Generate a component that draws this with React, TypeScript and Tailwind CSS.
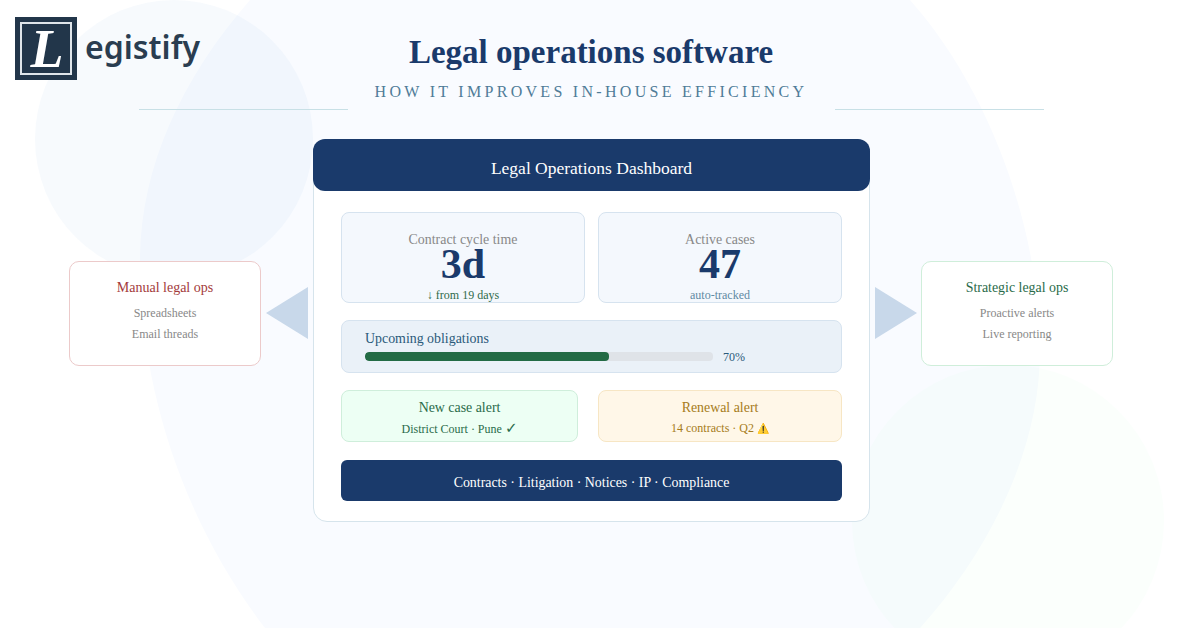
export default function App() {
  return (
    <div className="relative w-[1200px] h-[628px] overflow-hidden bg-white font-['Liberation_Serif',serif]">
      <svg className="absolute left-0 top-0" width="1200" height="628" viewBox="0 0 1200 628">
        <path d="M250 0C180 80 140 170 140 260C140 400 190 530 265 628L920 628C990 550 1040 450 1040 350C1040 230 990 90 910 0Z" fill="#f9fbff" />
      </svg>
      <div className="absolute left-[35px] top-0 w-[278px] h-[278px] rounded-full bg-[#bfd4f2]/12" />
      <div className="absolute left-[852px] top-[365px] w-[312px] h-[312px] rounded-full bg-[#dcfce7]/12" />

      <div className="absolute left-[15px] top-[17px] flex items-start">
        <div className="w-[62px] h-[63px] bg-[#22364a] p-[5px]">
          <div className="w-full h-full border-2 border-[#dfe5ea] flex items-center justify-center">
            <span className="text-white text-[54px] leading-none font-bold italic ml-[2px]">L</span>
          </div>
        </div>
        <span className="ml-[8px] mt-[10px] text-[32px] leading-[40px] font-semibold text-[#2a3d50] font-['Noto_Sans',sans-serif]">egistify</span>
      </div>

      <div className="relative flex flex-col">
        <div className="w-[1182px] flex flex-col items-center">
          <h1 className="mt-[31px] text-[33px] leading-[42px] font-bold text-[#1a3a6b]">Legal operations software</h1>
          <div className="flex items-center">
            <div className="w-[209px] h-px bg-[#c8e0e6] mt-[36px]" />
            <div className="w-[487px] text-center text-[16px] leading-[20px] tracking-[3.29px] text-[#4f7c98]">HOW IT IMPROVES IN-HOUSE EFFICIENCY</div>
            <div className="w-[209px] h-px bg-[#c8e0e6] mt-[36px]" />
          </div>
        </div>

        <div className="mt-[29px] w-full flex items-start pl-[69px]">
          <div className="mt-[122px] w-[192px] h-[105px] rounded-[10px] border border-[#eccaca] bg-white flex flex-col items-center pt-[16px]">
            <div className="text-[14px] leading-[20px] text-[#a33b3b]">Manual legal ops</div>
            <div className="mt-[5px] text-[12px] leading-[21px] text-[#888888]">Spreadsheets</div>
            <div className="text-[12px] leading-[21px] text-[#888888]">Email threads</div>
          </div>
          <div className="mt-[148px] ml-[5px] w-0 h-0 border-y-[26px] border-y-transparent border-r-[42px] border-r-[#c8d8ea]" />
          <div className="ml-[5px] w-[557px] h-[383px] rounded-[14px] border border-[#d6e4ec] bg-white flex flex-col">
            <div className="mx-[-1px] mt-[-1px] h-[52px] rounded-[12px] bg-[#1a3a6b] flex items-center justify-center pt-[6px] text-[17.5px] text-white">Legal Operations Dashboard</div>
            <div className="px-[27px] pt-[21px] flex flex-col">
              <div className="flex gap-[13px]">
                <div className="w-[244px] h-[91px] rounded-[8px] border border-[#d6e3ef] bg-[#f4f8fd] flex flex-col items-center pt-[18px]">
                  <div className="text-[13.9px] leading-[17px] text-[#888888]">Contract cycle time</div>
                  <div className="text-[42px] leading-[32px] font-bold text-[#1a3a6b]">3d</div>
                  <div className="mt-[8px] text-[12px] leading-[14px] text-[#2f6b4a]">↓ from 19 days</div>
                </div>
                <div className="w-[244px] h-[91px] rounded-[8px] border border-[#d6e3ef] bg-[#f4f8fd] flex flex-col items-center pt-[18px]">
                  <div className="text-[13.9px] leading-[17px] text-[#888888]">Active cases</div>
                  <div className="text-[42px] leading-[32px] font-bold text-[#1a3a6b]">47</div>
                  <div className="mt-[8px] text-[12px] leading-[14px] text-[#5f8aa3]">auto-tracked</div>
                </div>
              </div>
              <div className="mt-[17px] h-[53px] rounded-[8px] border border-[#d6e3ef] bg-[#eaf1f8] pl-[23px] pt-[10px]">
                <div className="text-[13.9px] leading-[16px] text-[#2a5a7a]">Upcoming obligations</div>
                <div className="flex items-start mt-[5px]">
                  <div className="w-[348px] h-[9px] rounded-[4px] bg-[#dfe3e8] overflow-hidden">
                    <div className="h-full rounded-[4px] bg-[#236b45]" style={{ width: "70%" }} />
                  </div>
                  <span className="ml-[10px] mt-[-2px] text-[12px] leading-[14px] text-[#2a5a7a]">70%</span>
                </div>
              </div>
              <div className="mt-[17px] flex gap-[20px]">
                <div className="w-[237px] h-[52px] rounded-[8px] border border-[#cfeedb] bg-[#edfff4] flex flex-col items-center pt-[8px]">
                  <div className="text-[13.9px] leading-[18px] text-[#2a6b4a]">New case alert</div>
                  <div className="mt-[3px] text-[12px] leading-[16px] text-[#2a6b4a]">District Court · Pune <span className="text-[15px] leading-[16px] font-['DejaVu_Sans',sans-serif]">✓</span></div>
                </div>
                <div className="w-[244px] h-[52px] rounded-[8px] border border-[#f7e6c4] bg-[#fff7e8] flex flex-col items-center pt-[8px]">
                  <div className="text-[13.9px] leading-[18px] text-[#a67c20]">Renewal alert</div>
                  <div className="mt-[3px] text-[12px] leading-[16px] text-[#a67c20]">14 contracts · Q2 <span className="text-[10px] leading-[16px]">⚠️</span></div>
                </div>
              </div>
              <div className="mt-[18px] h-[41px] rounded-[6px] bg-[#1a3a6b] flex items-center justify-center pt-[5px] text-[13.9px] text-white">Contracts · Litigation · Notices · IP · Compliance</div>
            </div>
          </div>
          <div className="mt-[148px] ml-[5px] w-0 h-0 border-y-[26px] border-y-transparent border-l-[42px] border-l-[#c8d8ea]" />
          <div className="mt-[122px] ml-[4px] w-[192px] h-[105px] rounded-[10px] border border-[#cfeeda] bg-white flex flex-col items-center pt-[16px]">
            <div className="text-[13.9px] leading-[20px] text-[#2a6b4a]">Strategic legal ops</div>
            <div className="mt-[5px] text-[12px] leading-[21px] text-[#888888]">Proactive alerts</div>
            <div className="text-[12px] leading-[21px] text-[#888888]">Live reporting</div>
          </div>
        </div>
      </div>
    </div>
  );
}
